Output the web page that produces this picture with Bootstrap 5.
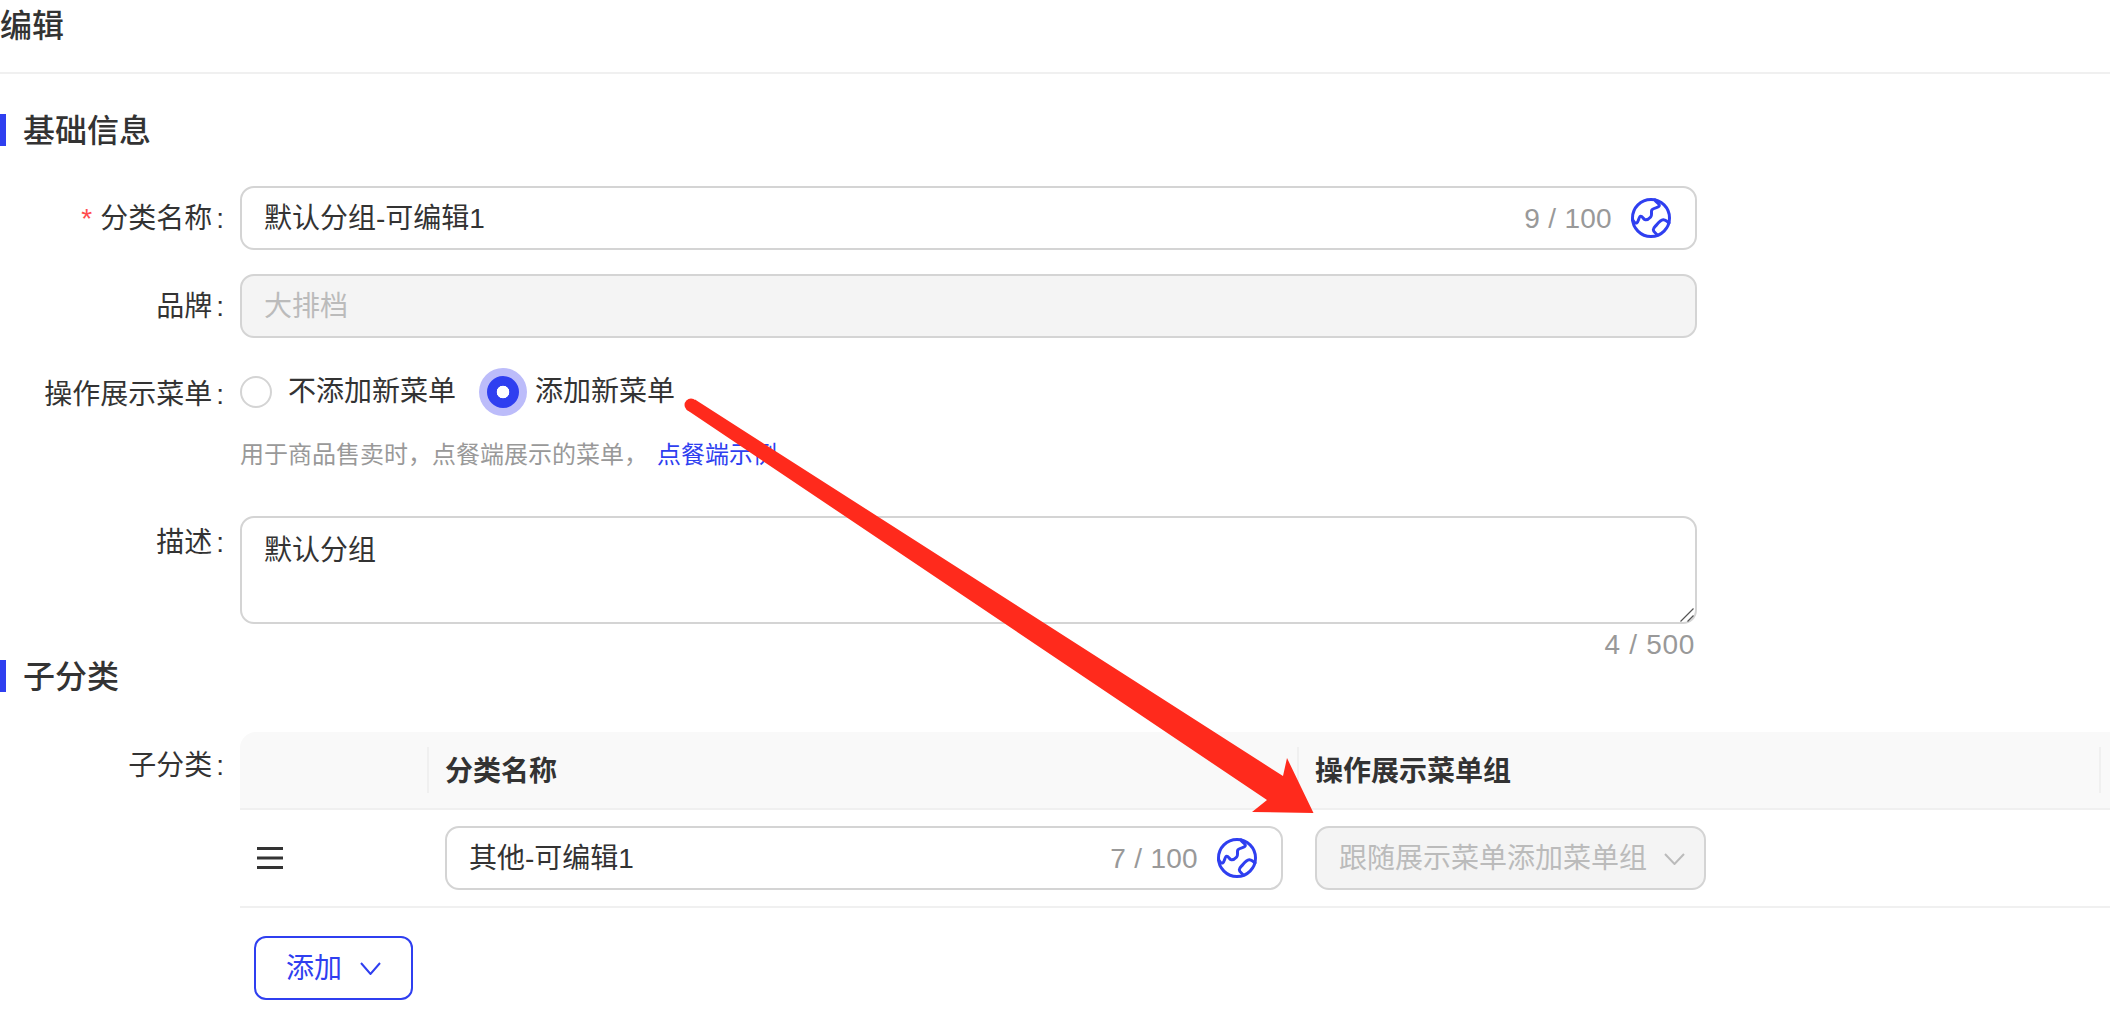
<!DOCTYPE html>
<html lang="zh-CN">
<head>
<meta charset="utf-8">
<title>编辑</title>
<link href="https://cdn.jsdelivr.net/npm/bootstrap@5.3.0/dist/css/bootstrap.min.css" rel="stylesheet">
<style>
:root{--ui-blue:#2f3ff0;--ui-line:#d4d4d4;--ui-text:#333;--ui-muted:#999;--ui-faint:#bbb;--ui-soft:#f0f0f0}
html,body{height:1028px;overflow:hidden}
body{font-family:"Liberation Sans","Noto Sans CJK SC",sans-serif;font-size:28px;color:var(--ui-text);background:#fff;position:relative}
.page-head{height:74px;font-size:32px;font-weight:500;line-height:52px;border-bottom:2px solid var(--ui-soft)}
.sec-head{height:32px;line-height:34px;font-size:32px;font-weight:500;padding-left:23px;position:relative}
.sec-head::before{content:"";position:absolute;left:0;top:0;width:6px;height:32px;background:var(--ui-blue)}
.sec-one{margin-top:40px}
.main-form{margin-top:40px}
.form-line{display:flex;margin-bottom:24px}
.form-lbl{flex:0 0 240px;height:64px;padding-right:16px;text-align:right;line-height:66px;white-space:nowrap}
.form-lbl .req{color:#ff4d4f;margin-right:8px;font-family:"Liberation Sans",sans-serif}
.form-lbl .cln{margin-left:4px}
.form-body{width:1457px}
.form-control.fld{height:64px;font-size:28px;line-height:36px;padding:13px 22px 11px;border:2px solid var(--ui-line);border-radius:14px;color:var(--ui-text);align-items:center}
.form-control.fld.off{background:#f4f4f4;color:var(--ui-faint)}
.cnt{color:var(--ui-muted);letter-spacing:.3px}
.glb{width:40px;height:40px;margin-left:19px;margin-right:2px;flex:none;margin-top:-2px}
.radio-line{height:48px;margin-top:30px;margin-bottom:0}
.radio-line .form-lbl{line-height:54px}
.opt{display:flex;align-items:center;gap:16px;margin:0;line-height:50px;height:48px}
.opt+.opt{margin-left:31px}
.form-check-input.rad{width:32px;height:32px;margin:0;border:2px solid var(--ui-line);flex:none;float:none}
.form-check-input.rad:checked{background-color:var(--ui-blue);border-color:var(--ui-blue);background-image:radial-gradient(circle,#fff 0,#fff 6px,transparent 6.6px);box-shadow:0 0 0 8px #bcbcfa}
.hint{margin:21px 0 43px 240px;font-size:24px;line-height:36px;color:var(--ui-muted)}
.hint a{color:var(--ui-blue);text-decoration:none;margin-left:9px}
.area-wrap{position:relative}
.form-control.area{height:108px;font-size:28px;line-height:36px;padding:15px 22px;border:2px solid var(--ui-line);border-radius:14px;color:var(--ui-text);display:block;resize:none}
.grip{position:absolute;right:3px;bottom:2px;width:14px;height:14px}
.lbl-area{line-height:54px}
.area-cnt{margin-top:6px;line-height:30px;text-align:right;padding-right:2px;color:var(--ui-muted);letter-spacing:.7px}
.sub-wrap{margin-top:40px;display:flex}
.sub-wrap .form-lbl{line-height:68px}
.sub-table{width:1870px;table-layout:fixed;margin:0;--bs-table-color:var(--ui-text);border-collapse:separate;border-spacing:0}
.sub-table th{height:78px;background:#f9f9f9;font-weight:700;font-size:28px;padding:3px 0 0 17px;border-bottom:2px solid var(--ui-soft);position:relative;vertical-align:middle}
.sub-table th:first-child{border-top-left-radius:16px}
.sub-table th:not(:first-child)::before{content:"";position:absolute;left:-1px;top:15px;height:46px;width:2px;background:var(--ui-soft)}
.sub-table td{height:98px;padding:0 0 0 17px;border-bottom:2px solid var(--ui-soft);vertical-align:middle}
.drag{display:block;width:26px;height:22px}
.row-fld{width:838px}
.sel{width:391px;white-space:nowrap}
.chev{flex:none;margin-left:17px}
.add-btn{--bs-btn-color:var(--ui-blue);--bs-btn-border-color:var(--ui-blue);--bs-btn-hover-color:var(--ui-blue);--bs-btn-hover-bg:#fff;--bs-btn-hover-border-color:var(--ui-blue);width:159px;height:64px;margin:28px 0 0 254px;font-size:28px;line-height:36px;border-width:2px;border-radius:12px;display:flex;align-items:center;justify-content:center;gap:18px;padding:2px 0 0}
.add-btn svg{margin-top:-2px}
.mark-arrow{position:absolute;left:0;top:0;width:2110px;height:1028px;pointer-events:none}
</style>
</head>
<body>
<div class="page-head">编辑</div>

<div class="sec-head sec-one">基础信息</div>

<form class="main-form" onsubmit="return false">
  <div class="form-line">
    <div class="form-lbl"><span class="req">*</span>分类名称<span class="cln">:</span></div>
    <div class="form-body">
      <div class="form-control fld d-flex">
        <span class="flex-grow-1">默认分组-可编辑1</span>
        <span class="cnt">9 / 100</span>
        <svg class="glb" viewBox="0 0 40 40" fill="none" stroke="#2f3ff0" stroke-width="3" stroke-linecap="round" stroke-linejoin="round"><circle cx="20" cy="20" r="18.5"/><path d="M24 2c.5 2.5 4.5 3 4.3 5.7c-.2 2.5-6.6 1.8-7.6 4.6c-.7 2 .6 5-1 6.7c-1.4 1.5-4 3.3-5.7 2.7c-1.7-.6-2.5-3.5-4.3-3.4c-2 .1-2 5.5-4 6.7c-1.3.7-2.8-1.3-4.4-3.3"/><path d="M38 25c-1.5-1.2-3.5-3.5-5.7-3.3c-2.5.2-5 3-6.6 5c-1.3 1.7-3.4 3-3.4 5c0 1.8 2 3 3.5 4.8"/></svg>
      </div>
    </div>
  </div>
  <div class="form-line mb-0">
    <div class="form-lbl">品牌<span class="cln">:</span></div>
    <div class="form-body">
      <div class="form-control fld off d-flex">大排档</div>
    </div>
  </div>
  <div class="form-line radio-line">
    <div class="form-lbl">操作展示菜单<span class="cln">:</span></div>
    <div class="d-flex">
      <label class="opt"><input class="form-check-input rad" type="radio" name="m">不添加新菜单</label>
      <label class="opt"><input class="form-check-input rad" type="radio" name="m" checked>添加新菜单</label>
    </div>
  </div>
  <div class="hint">用于商品售卖时，点餐端展示的菜单，<a href="#">点餐端示例</a></div>
  <div class="form-line mb-0">
    <div class="form-lbl lbl-area">描述<span class="cln">:</span></div>
    <div class="form-body">
      <div class="area-wrap">
        <textarea class="form-control area">默认分组</textarea>
        <svg class="grip" viewBox="0 0 14 14" fill="none" stroke="#555" stroke-width="1.2"><path d="M0.5 13.5L13.5 0.5M7.5 13.5L13.5 7.5"/></svg>
      </div>
      <div class="area-cnt">4 / 500</div>
    </div>
  </div>

  <div class="sec-head">子分类</div>

  <div class="sub-wrap">
    <div class="form-lbl">子分类<span class="cln">:</span></div>
    <div>
      <table class="table sub-table">
        <colgroup><col style="width:188px"><col style="width:870px"><col style="width:802px"><col></colgroup>
        <thead><tr><th></th><th>分类名称</th><th>操作展示菜单组</th><th></th></tr></thead>
        <tbody><tr>
          <td><svg class="drag" viewBox="0 0 26 22"><rect width="26" height="3" fill="#333"/><rect y="9.5" width="26" height="3" fill="#333"/><rect y="19" width="26" height="3" fill="#333"/></svg></td>
          <td><div class="form-control fld d-flex row-fld">
            <span class="flex-grow-1">其他-可编辑1</span>
            <span class="cnt">7 / 100</span>
            <svg class="glb" viewBox="0 0 40 40" fill="none" stroke="#2f3ff0" stroke-width="3" stroke-linecap="round" stroke-linejoin="round"><circle cx="20" cy="20" r="18.5"/><path d="M24 2c.5 2.5 4.5 3 4.3 5.7c-.2 2.5-6.6 1.8-7.6 4.6c-.7 2 .6 5-1 6.7c-1.4 1.5-4 3.3-5.7 2.7c-1.7-.6-2.5-3.5-4.3-3.4c-2 .1-2 5.5-4 6.7c-1.3.7-2.8-1.3-4.4-3.3"/><path d="M38 25c-1.5-1.2-3.5-3.5-5.7-3.3c-2.5.2-5 3-6.6 5c-1.3 1.7-3.4 3-3.4 5c0 1.8 2 3 3.5 4.8"/></svg>
          </div></td>
          <td><div class="form-control fld off d-flex sel">跟随展示菜单添加菜单组
            <svg class="chev" width="21" height="12" viewBox="0 0 21 12" fill="none" stroke="#bbb" stroke-width="2"><path d="M1 1l9.5 10L20 1"/></svg>
          </div></td>
          <td></td>
        </tr></tbody>
      </table>
    </div>
  </div>

  <button type="button" class="btn btn-outline-primary add-btn">添加
    <svg width="21" height="13" viewBox="0 0 21 13" fill="none" stroke="#2f3ff0" stroke-width="2"><path d="M1 1l9.5 11L20 1"/></svg>
  </button>
</form>

<svg class="mark-arrow" viewBox="0 0 2110 1028">
  <circle cx="691" cy="405" r="6.5" fill="#ff2a1c"/>
  <polygon fill="#ff2a1c" points="695,399.5 1283,776 1287,758 1313.5,813 1252,812 1267,800 687,410"/>
</svg>
</body>
</html>
